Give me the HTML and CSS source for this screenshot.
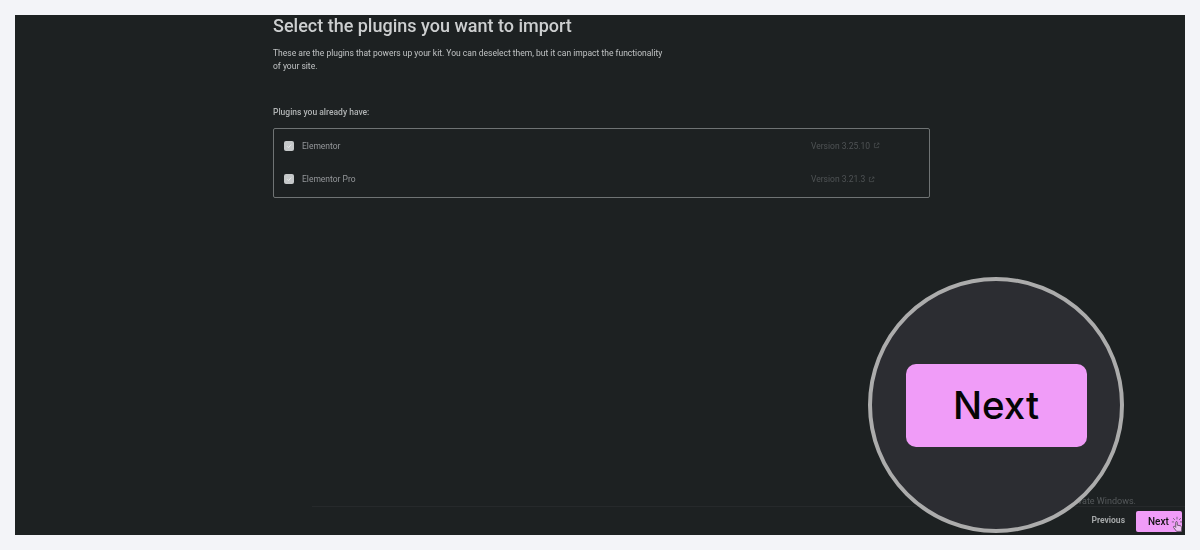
FILE: index.html
```html
<!DOCTYPE html>
<html lang="en">
<head>
  <meta charset="UTF-8">
  <title>Select the plugins you want to import</title>
  <link rel="stylesheet" href="styles.css">
</head>
<body>

<div class="screen">
  <div class="kit-content">
    <h2>Select the plugins you want to import</h2>
    <p class="kit-intro">These are the plugins that powers up your kit. You can deselect them, but it can impact the functionality of your site.</p>
    <div class="kit-label">Plugins you already have:</div>
    <div class="plugin-box">
      <div class="plugin-row">
        <span class="plugin-check"><svg viewBox="0 0 10 10"><path d="M3 5.200l1.500 1.500L7.200 3.500"/></svg></span>
        <span class="plugin-name">Elementor</span>
        <span class="plugin-version">Version 3.25.10
          <svg class="ext-icon" viewBox="0 0 10 10"><path d="M4 2H2v6h6V6M5 5l3.500-3.500M6 1.500h2.500V4"/></svg>
        </span>
      </div>
      <div class="plugin-row">
        <span class="plugin-check"><svg viewBox="0 0 10 10"><path d="M3 5.200l1.500 1.500L7.200 3.500"/></svg></span>
        <span class="plugin-name">Elementor Pro</span>
        <span class="plugin-version">Version 3.21.3
          <svg class="ext-icon" viewBox="0 0 10 10"><path d="M4 2H2v6h6V6M5 5l3.500-3.500M6 1.500h2.500V4"/></svg>
        </span>
      </div>
    </div>
  </div>

  <div class="kit-footer">
    <span class="activate-note">Activate Windows.</span>
    <div class="footer-actions">
      <span class="btn-previous">Previous</span>
      <span class="btn-next">Next</span>
    </div>
  </div>

  <svg class="cursor-icon" viewBox="0 0 14 18">
    <path class="cursor-spark" d="M7 0v3M2.500 1.500l2 2.200M11.500 1.500l-2 2.200M1 6h2.500M13 6h-2.500"/>
    <path class="cursor-hand" d="M5.500 6.500c0-1.200 1.800-1.200 1.800 0v3.300l3.200.6c1.200.2 1.800 1 1.800 2V17H6.500L3 12.500c-.8-1 .6-2 1.500-1.100l1 1z"/>
  </svg>

  <div class="magnifier">
    <div class="magnifier-btn">Next</div>
  </div>
</div>

</body>
</html>
```

FILE: styles.css
```css
* {
  margin: 0;
  padding: 0;
  box-sizing: border-box;
}

html, body {
  height: 100%;
}

body {
  background-color: #f3f4f8;
  padding: 15px;
  font-family: Roboto, Arial, sans-serif;
  overflow: hidden;
}

.screen {
  position: relative;
  height: 520px;
  background-color: #1d2122;
  overflow: hidden;
  display: flex;
  flex-direction: column;
  justify-content: space-between;
}

.kit-content {
  width: 657px;
  margin-left: 258px;
  filter: blur(0.4px);
}

h2 {
  font-size: 18px;
  line-height: 22px;
  font-weight: 500;
  color: #cdcfd0;
}

.kit-intro {
  width: 395px;
  margin-top: 10px;
  font-size: 8.500px;
  line-height: 13px;
  color: #c0c3c4;
}

.kit-label {
  margin-top: 33px;
  font-size: 8.500px;
  line-height: 13px;
  font-weight: 500;
  color: #b0b3b4;
}

.plugin-box {
  margin-top: 9px;
  height: 70px;
  border: 1px solid #6f7374;
  border-radius: 2px;
  padding: 0 0 2px 10px;
}

.plugin-row {
  display: flex;
  align-items: center;
  height: 33.500px;
}

.plugin-check {
  width: 10px;
  height: 10px;
  border-radius: 2px;
  background-color: #c5c8c9;
}

.plugin-check svg {
  display: block;
  fill: none;
  stroke: #e6e8e8;
  stroke-width: 1;
}

.plugin-name {
  width: 509px;
  margin-left: 8px;
  font-size: 8.500px;
  color: #94979a;
}

.plugin-version {
  font-size: 8.500px;
  color: #4f5355;
  display: flex;
  align-items: center;
  gap: 3px;
}

.ext-icon {
  width: 7px;
  height: 7px;
  fill: none;
  stroke: #4f5355;
  stroke-width: 1;
}

.kit-footer {
  position: relative;
  margin-left: 297px;
  border-top: 1px solid #26292b;
  height: 29px;
  display: flex;
  justify-content: flex-end;
  filter: blur(0.3px);
}

.activate-note {
  position: absolute;
  right: 49px;
  top: -11px;
  font-size: 9px;
  line-height: 11px;
  color: #55595b;
}

.footer-actions {
  display: flex;
  align-items: flex-start;
  gap: 11px;
  padding-right: 3px;
}

.btn-previous {
  margin-top: 7px;
  font-size: 8.500px;
  line-height: 12px;
  font-weight: 700;
  color: #a4a7a8;
}

.btn-next {
  width: 46px;
  height: 21px;
  padding: 4px 0 0 12px;
  margin-top: 4px;
  background-color: #f09cf8;
  border-radius: 2px;
  font-size: 10px;
  line-height: 14px;
  font-weight: 500;
  color: #111;
}

.cursor-icon {
  position: absolute;
  right: 2px;
  bottom: 2px;
  width: 12px;
  height: 17px;
}

.cursor-spark {
  fill: none;
  stroke: #6d5a70;
  stroke-width: 1;
}

.cursor-hand {
  fill: #f0c4f4;
  stroke: #4a3f4c;
  stroke-width: 0.900;
}

.magnifier {
  position: absolute;
  left: 853px;
  top: 262px;
  width: 256px;
  height: 256px;
  border: 4px solid #acacac;
  border-radius: 50%;
  background-color: #2c2d32;
  display: flex;
  align-items: center;
  justify-content: center;
}

.magnifier-btn {
  width: 181px;
  height: 83px;
  padding-bottom: 2px;
  margin-top: 1px;
  background-color: #f09cf8;
  border-radius: 10px;
  display: flex;
  align-items: center;
  justify-content: center;
  font-family: Inter, sans-serif;
  font-size: 38.500px;
  font-weight: 500;
  color: #050505;
}
```
